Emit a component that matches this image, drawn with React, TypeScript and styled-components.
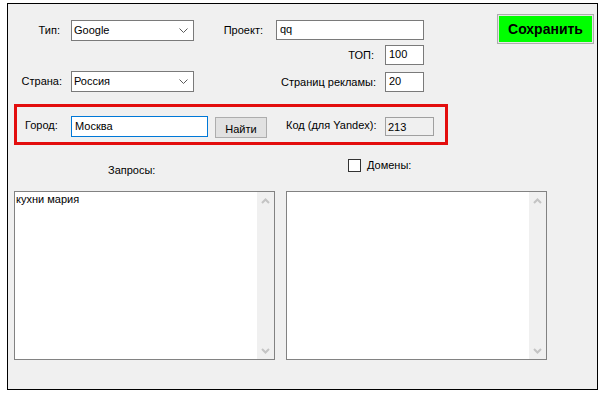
import React from 'react';
import styled, { createGlobalStyle } from 'styled-components';

const Global = createGlobalStyle`
  html, body { margin: 0; padding: 0; background: #ffffff; }
  body {
    font-family: "Liberation Sans", Arial, sans-serif;
    font-size: 11px;
    color: #000000;
  }
  * { box-sizing: border-box; }
`;

const Window = styled.div`
  margin: 3px 0 0 7px;
  width: 591px;
  height: 387px;
  border: 1px solid #000000;
  background: #f0f0f0;
  display: flex;
  flex-direction: column;
`;

const TopGrid = styled.div`
  display: grid;
  grid-template-columns: 63px 123px 82px 109px 39px 73px 97px;
  grid-template-rows: 31px 26px 22px;
  margin-top: 10px;
`;

const Label = styled.div<{ $col: string; $row: number; $pr: number; $mt?: number }>`
  grid-column: ${(p) => p.$col};
  grid-row: ${(p) => p.$row};
  align-self: start;
  margin-top: ${(p) => p.$mt ?? 0}px;
  height: 20px;
  line-height: 20px;
  text-align: right;
  padding-right: ${(p) => p.$pr}px;
  white-space: nowrap;
`;

const Combo = styled.div<{ $col: string; $row: number; $mt?: number }>`
  grid-column: ${(p) => p.$col};
  grid-row: ${(p) => p.$row};
  align-self: start;
  margin-top: ${(p) => p.$mt ?? 0}px;
  height: 21px;
  background: #ffffff;
  border: 1px solid #7a7a7a;
  display: flex;
  align-items: center;
  justify-content: space-between;
  padding: 0 5px 1px 2px;
`;

const Field = styled.div<{ $col: string; $row: number; $mt?: number }>`
  grid-column: ${(p) => p.$col};
  grid-row: ${(p) => p.$row};
  align-self: start;
  margin-top: ${(p) => p.$mt ?? 0}px;
  height: 20px;
  line-height: 17px;
  background: #ffffff;
  border: 1px solid #7a7a7a;
  padding-left: 3px;
`;

const SaveButton = styled.button`
  grid-column: 7;
  grid-row: 1;
  align-self: start;
  height: 30px;
  margin: 0;
  border: 1px solid #adadad;
  box-shadow: inset 0 0 0 1px #e6e6e6;
  padding: 0 0 1px 0;
  background: #00ff00;
  font-family: "Liberation Sans", Arial, sans-serif;
  font-weight: bold;
  font-size: 14px;
  color: #000000;
`;

const RedBox = styled.div`
  margin: 11px 0 0 6px;
  width: 434px;
  height: 41px;
  border: 3px solid #e30e0e;
  display: flex;
  align-items: flex-start;
  padding-top: 9px;
`;

const BoxLabel = styled.div<{ $w: number; $pl: number }>`
  width: ${(p) => p.$w}px;
  padding-left: ${(p) => p.$pl}px;
  height: 20px;
  line-height: 19px;
  white-space: nowrap;
`;

const CityInput = styled.div`
  width: 137px;
  height: 21px;
  line-height: 18px;
  background: #ffffff;
  border: 1px solid #0078d7;
  padding-left: 3px;
`;

const FindButton = styled.button`
  margin: 1px 0 0 7px;
  width: 52px;
  height: 21px;
  padding: 2px 0 0 0;
  background: #e1e1e1;
  border: 1px solid #adadad;
  font-family: "Liberation Sans", Arial, sans-serif;
  font-size: 11px;
  color: #000000;
`;

const ReadOnlyField = styled.div`
  margin-top: 1px;
  width: 49px;
  height: 19px;
  line-height: 19px;
  background: #f0f0f0;
  border: 1px solid #a0a0a0;
  padding-left: 2px;
`;

const HeadingRow = styled.div`
  margin-left: 6px;
  height: 46px;
  display: flex;
  gap: 11px;
`;

const Heading = styled.div<{ $pt: number; $pl: number }>`
  width: 261px;
  padding-top: ${(p) => p.$pt}px;
  padding-left: ${(p) => p.$pl}px;
  display: flex;
  align-items: center;
  align-self: flex-start;
  gap: 6px;
  line-height: 13px;
`;

const CheckBox = styled.span`
  display: inline-block;
  width: 13px;
  height: 13px;
  background: #ffffff;
  border: 1px solid #333333;
`;

const ListRow = styled.div`
  margin-left: 6px;
  display: flex;
  gap: 11px;
`;

const ListBox = styled.div`
  width: 261px;
  height: 169px;
  background: #ffffff;
  border: 1px solid #828282;
  display: flex;
`;

const ListItems = styled.div`
  flex: 1;
  padding: 1px 0 0 1px;
  line-height: 13px;
`;

const ScrollBar = styled.div`
  width: 17px;
  background: #f0f0f0;
  display: flex;
  flex-direction: column;
  justify-content: space-between;
`;

const ArrowCell = styled.div`
  height: 17px;
  display: flex;
  align-items: center;
  justify-content: center;
`;

const DropArrow = () => (
  <svg width="9" height="5" viewBox="0 0 9 5">
    <polyline points="0.5,0.5 4.5,4.5 8.5,0.5" fill="none" stroke="#5a5a5a" strokeWidth="1" />
  </svg>
);

const ScrollArrow = ({ up }: { up?: boolean }) => (
  <svg width="9" height="6" viewBox="0 0 9 6">
    <polyline
      points={up ? '1,5 4.5,1.5 8,5' : '1,1 4.5,4.5 8,1'}
      fill="none"
      stroke="#c4c4c4"
      strokeWidth="2"
    />
  </svg>
);

const List = ({ items }: { items: string[] }) => (
  <ListBox>
    <ListItems>
      {items.map((t) => (
        <div key={t}>{t}</div>
      ))}
    </ListItems>
    <ScrollBar>
      <ArrowCell>
        <ScrollArrow up />
      </ArrowCell>
      <ArrowCell>
        <ScrollArrow />
      </ArrowCell>
    </ScrollBar>
  </ListBox>
);

export default function App() {
  return (
    <>
      <Global />
      <Window>
        <TopGrid>
          <Label $col="1" $row={1} $pr={11} $mt={6}>Тип:</Label>
          <Combo $col="2" $row={1} $mt={6}>
            <span>Google</span>
            <DropArrow />
          </Combo>
          <Label $col="3" $row={1} $pr={13} $mt={6}>Проект:</Label>
          <Field $col="4 / span 2" $row={1} $mt={6}>qq</Field>
          <SaveButton>Сохранить</SaveButton>

          <Label $col="3 / span 2" $row={2} $pr={11}>ТОП:</Label>
          <Field $col="5" $row={2}>100</Field>

          <Label $col="1" $row={3} $pr={9}>Страна:</Label>
          <Combo $col="2" $row={3}>
            <span>Россия</span>
            <DropArrow />
          </Combo>
          <Label $col="3 / span 2" $row={3} $pr={9} $mt={1}>Страниц рекламы:</Label>
          <Field $col="5" $row={3} $mt={1}>20</Field>
        </TopGrid>

        <RedBox>
          <BoxLabel $w={54} $pl={8}>Город:</BoxLabel>
          <CityInput>Москва</CityInput>
          <FindButton>Найти</FindButton>
          <BoxLabel $w={118} $pl={19}>Код (для Yandex):</BoxLabel>
          <ReadOnlyField>213</ReadOnlyField>
        </RedBox>

        <HeadingRow>
          <Heading $pt={19} $pl={94}>Запросы:</Heading>
          <Heading $pt={14} $pl={62}>
            <CheckBox />
            <span>Домены:</span>
          </Heading>
        </HeadingRow>

        <ListRow>
          <List items={['кухни мария']} />
          <List items={[]} />
        </ListRow>
      </Window>
    </>
  );
}
